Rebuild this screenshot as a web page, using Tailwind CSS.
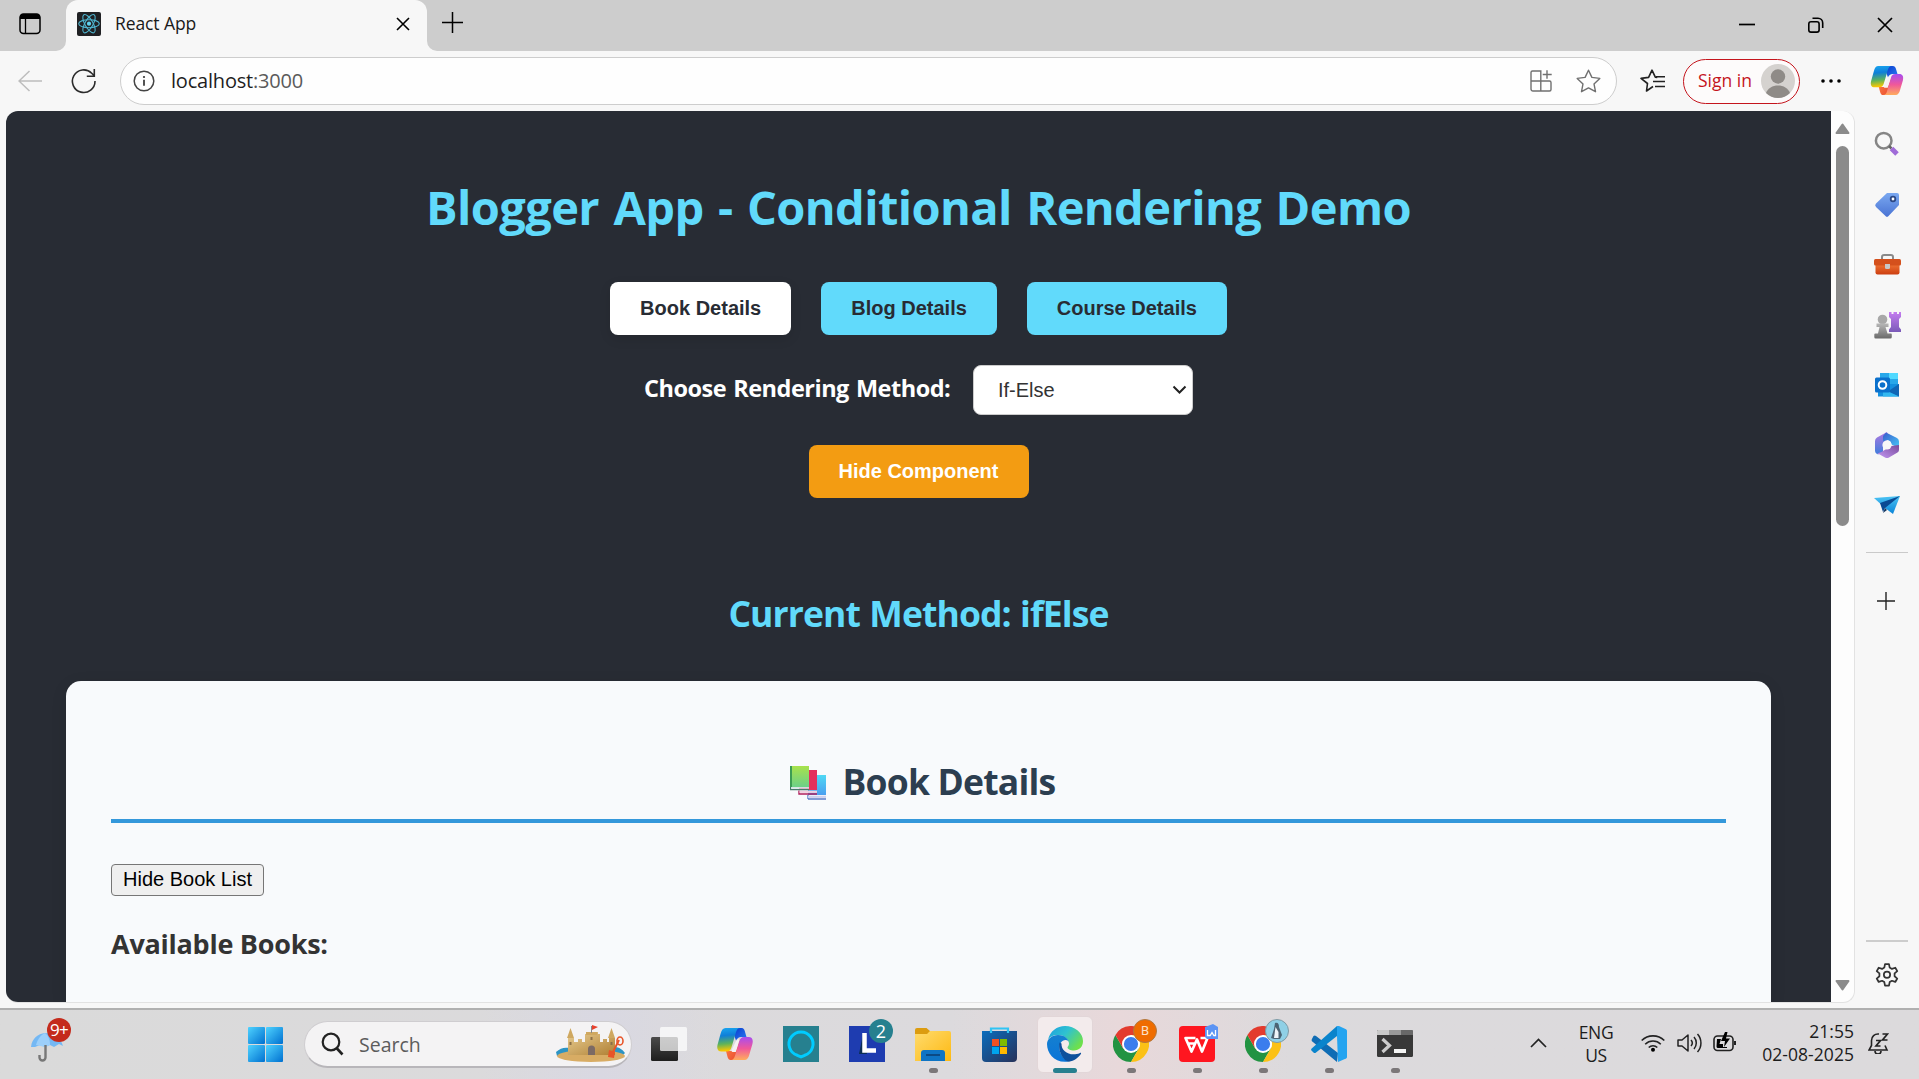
<!DOCTYPE html>
<html lang="en">
<head>
<meta charset="utf-8">
<title>React App</title>
<script src="https://cdn.jsdelivr.net/npm/@tailwindcss/browser@4"></script>
</head>
<body class="w-[1919px] h-[1079px] overflow-hidden bg-[#f7f7f7] font-['Open_Sans','Noto_Sans',sans-serif] flex flex-col">

<!-- shared gradients and symbols -->
<svg class="absolute w-0 h-0" aria-hidden="true">
  <defs>
    <linearGradient id="cpA" x1="0" y1="0" x2="0.1" y2="1"><stop offset="0" stop-color="#1aa7f0"/><stop offset=".35" stop-color="#0f7fd8"/><stop offset=".7" stop-color="#5fb35a"/><stop offset="1" stop-color="#ffc800"/></linearGradient>
    <linearGradient id="cpB" x1="0" y1="0" x2="0" y2="1"><stop offset="0" stop-color="#a84cf0"/><stop offset=".5" stop-color="#f0589a"/><stop offset="1" stop-color="#ffad5c"/></linearGradient>
    <linearGradient id="cpC" x1="0" y1="0" x2="1" y2="1"><stop offset="0" stop-color="#0a3ccc"/><stop offset="1" stop-color="#2a7cf4"/></linearGradient>
    <linearGradient id="cpD" x1="0" y1="0" x2="1" y2="1"><stop offset="0" stop-color="#ff8a4c"/><stop offset="1" stop-color="#e8452c"/></linearGradient>
    <linearGradient id="win" x1="0" y1="0" x2="1" y2="1"><stop offset="0" stop-color="#4fd3ff"/><stop offset="1" stop-color="#0070d0"/></linearGradient>
    <linearGradient id="sky" x1="0" y1="0" x2="0" y2="1"><stop offset="0" stop-color="#4fd8f4"/><stop offset="1" stop-color="#4a9ff0"/></linearGradient>
    <linearGradient id="grn" x1="0" y1="0" x2="0" y2="1"><stop offset="0" stop-color="#a8e24c"/><stop offset="1" stop-color="#6cd088"/></linearGradient>
    <linearGradient id="fold" x1="0" y1="0" x2="1" y2="1"><stop offset="0" stop-color="#ffdb6e"/><stop offset="1" stop-color="#fdb912"/></linearGradient>
    <linearGradient id="store" x1="0" y1="0" x2="1" y2="1"><stop offset="0" stop-color="#0a6cbd"/><stop offset="1" stop-color="#28325a"/></linearGradient>
    <linearGradient id="edT" x1="0" y1="0" x2="1" y2=".6"><stop offset="0" stop-color="#1b9de0"/><stop offset=".5" stop-color="#2fc2d0"/><stop offset="1" stop-color="#6ee04c"/></linearGradient>
    <linearGradient id="edL" x1="0" y1="0" x2="0" y2="1"><stop offset="0" stop-color="#1580d0"/><stop offset="1" stop-color="#0a74d8"/></linearGradient>
    <linearGradient id="pur" x1="0" y1="0" x2="0" y2="1"><stop offset="0" stop-color="#c47cf0"/><stop offset="1" stop-color="#7a5ab8"/></linearGradient>
    <linearGradient id="gry" x1="0" y1="0" x2="0" y2="1"><stop offset="0" stop-color="#b8b8b8"/><stop offset="1" stop-color="#6a6a6a"/></linearGradient>
    <linearGradient id="org" x1="0" y1="0" x2="0" y2="1"><stop offset="0" stop-color="#f07434"/><stop offset="1" stop-color="#cc3e10"/></linearGradient>
    <linearGradient id="tag" x1="0" y1="0" x2="0" y2="1"><stop offset="0" stop-color="#7aa8f0"/><stop offset="1" stop-color="#4a74d4"/></linearGradient>
    <linearGradient id="sand" x1="0" y1="0" x2="1" y2="1"><stop offset="0" stop-color="#e8cd92"/><stop offset="1" stop-color="#b08034"/></linearGradient>
    <linearGradient id="plane" x1="0" y1="0" x2="0" y2="1"><stop offset="0" stop-color="#4cc4f4"/><stop offset="1" stop-color="#0a84d8"/></linearGradient>
    <linearGradient id="dark" x1="0" y1="0" x2="0" y2="1"><stop offset="0" stop-color="#4a4a4a"/><stop offset="1" stop-color="#1e1e1e"/></linearGradient>
    <linearGradient id="m1" x1="0" y1="1" x2="0" y2="0"><stop offset="0" stop-color="#3f7ddc"/><stop offset="1" stop-color="#b078e0"/></linearGradient>
    <linearGradient id="m2" x1="0" y1="0" x2="1" y2="1"><stop offset="0" stop-color="#3a5ccc"/><stop offset="1" stop-color="#46c8f8"/></linearGradient>
    <linearGradient id="m3" x1="0" y1="1" x2="1" y2="0"><stop offset="0" stop-color="#c49af4"/><stop offset="1" stop-color="#7a4a9c"/></linearGradient>
  </defs>
  <symbol id="copilot" viewBox="0 0 36 34">
    <path d="M18 1h6c3 0 3.600 2 4.200 4.500L29.500 10h-5c-3 0-4.500 1.500-5.300 4L17 8z" fill="url(#cpC)"/>
    <path d="M9 24h7c2.500 0 3.500-1 4.300-4l2.700-9-2 14-3.500 8h-3c-3 0-3.500-1.500-4.200-4z" fill="url(#cpD)"/>
    <path d="M8.500 1H23c-2 0-3.200 1.500-4 4.200L14.600 20c-.9 3-2 4.500-5 4.500H4.500C1 24.500-.5 22 .6 17.500L3.500 7C4.500 3 6 1 8.500 1z" fill="url(#cpA)"/>
    <path d="M27.500 33H14c2 0 3.200-1.500 4-4.200L22.200 14.500c.9-3 2-4.500 5-4.500h4.300c3.500 0 5 2.500 3.900 7L32.500 27c-1 4-2.500 6-5 6z" fill="url(#cpB)"/>
    <path d="M19.800 12.500h2.800L18.800 25h-2.600c-1.200 0-2-.6-1.600-2z" fill="#f7f1f4"/>
  </symbol>
  <symbol id="chrome" viewBox="0 0 36 36">
    <path d="M2.400 9A18 18 0 0 0 18 36l7.800-13.500L10.200 22.500z" fill="#229342"/>
    <path d="M33.600 9A18 18 0 0 1 18 36l7.800-13.500A9 9 0 0 0 25.800 13.500L18 9z" fill="#fbc116"/>
    <path d="M2.400 9l7.800 13.500L18 9h15.600A18 18 0 0 0 2.400 9z" fill="#e33b2e"/>
    <circle cx="18" cy="18" r="9" fill="#fff"/><circle cx="18" cy="18" r="7.100" fill="#3b7ded"/>
  </symbol>
</svg>

<!-- tab strip -->
<header class="h-[51px] shrink-0 bg-[#cdcdcd] flex items-center">
  <div class="w-[66px] h-full flex items-center pl-[19px] pb-[3px]">
    <svg width="22" height="22" viewBox="0 0 22 22"><rect x="1" y="1" width="20" height="19.500" rx="3.500" fill="none" stroke="#000" stroke-width="1.500"/><path d="M1 6V4a3 3 0 0 1 3-3h14a3 3 0 0 1 3 3v2z"/><path d="M6.500 5v15" stroke="#000" stroke-width="1.300"/></svg>
  </div>
  <div class="relative w-[361px] h-full bg-[#f7f7f7] rounded-t-[12px] flex items-center pl-[11px] pr-4 pb-1">
    <svg class="absolute -left-[10px] bottom-0" width="10" height="10"><path d="M10 0v10H0A10 10 0 0 0 10 0z" fill="#f7f7f7"/></svg>
    <svg class="absolute -right-[10px] bottom-0" width="10" height="10"><path d="M0 0v10h10A10 10 0 0 1 0 0z" fill="#f7f7f7"/></svg>
    <svg width="24" height="24" viewBox="0 0 24 24"><rect width="24" height="24" rx="2" fill="#202124"/><g fill="none" stroke="#4fb6d0" stroke-width="1.100"><ellipse cx="12" cy="11.700" rx="10.300" ry="4"/><ellipse cx="12" cy="11.700" rx="10.300" ry="4" transform="rotate(60 12 11.700)"/><ellipse cx="12" cy="11.700" rx="10.300" ry="4" transform="rotate(120 12 11.700)"/></g><circle cx="12" cy="11.700" r="2.100" fill="#5fd3f0"/></svg>
    <span class="ml-[14px] mb-[2px] grow text-[17.500px] leading-6 tracking-[-0.1px] text-[#1a1a1a]">React App</span>
    <svg class="mr-px" width="14" height="14"><path d="M1 1l12 12M13 1L1 13" stroke="#000" stroke-width="1.600"/></svg>
  </div>
  <svg class="ml-[15px] mb-[5px]" width="22" height="22"><path d="M0 10.500h21M10.500 0v21" stroke="#000" stroke-width="1.500"/></svg>
  <div class="ml-auto flex items-center pr-[26px] pb-[2px]">
    <svg width="16" height="16"><path d="M0 7.500h16" stroke="#000" stroke-width="1.700"/></svg>
    <svg class="ml-[53px]" width="16" height="16" viewBox="0 0 16 16"><rect x=".8" y="4.800" width="10.300" height="10.300" rx="2.200" fill="none" stroke="#000" stroke-width="1.600"/><path d="M4.500 1.300H10a4.700 4.700 0 0 1 4.700 4.700v5" fill="none" stroke="#000" stroke-width="1.600"/></svg>
    <svg class="ml-[53px]" width="16" height="16"><path d="M1 1l14 14M15 1L1 15" stroke="#000" stroke-width="1.700"/></svg>
  </div>
</header>

<!-- toolbar -->
<div class="h-[60px] shrink-0 flex items-center">
  <svg class="ml-[18px] mb-px" width="24" height="22" viewBox="0 0 24 22"><path d="M24 11H1M11.500 1L1 11l10.500 10" fill="none" stroke="#bdbdbd" stroke-width="1.500"/></svg>
  <svg class="ml-[29px]" width="26" height="26" viewBox="0 0 26 26"><path d="M24 13a11.300 11.300 0 1 1-3.300-7.800L23 7.500M23.300 1v7.200h-7.500" fill="none" stroke="#2b2b2b" stroke-width="1.600"/></svg>
  <div class="ml-[23px] w-[1497px] h-12 mb-px rounded-full border border-[#cdcdcd] bg-[#fefefe] flex items-center pl-3 pr-[15px]">
    <svg width="22" height="22" viewBox="0 0 22 22"><circle cx="11" cy="11" r="9.800" fill="none" stroke="#444" stroke-width="1.500"/><path d="M11 9.800v6" stroke="#333" stroke-width="1.700"/><circle cx="11" cy="7" r="1.100" fill="#333"/></svg>
    <span class="ml-4 mt-px grow text-[20px] leading-6 tracking-[-0.2px] text-[#1f1f1f]">localhost<span class="text-[#5a5a5a]">:3000</span></span>
    <svg width="22" height="22" viewBox="0 0 22 22"><path d="M2.500 1h8.300v20H3a2 2 0 0 1-2-2V2.500A1.500 1.500 0 0 1 2.500 1zM1 11h18.500A1.500 1.500 0 0 1 21 12.500v7a1.500 1.500 0 0 1-1.500 1.500h-9M17 .2v8.600M12.700 4.500h9" fill="none" stroke="#707070" stroke-width="1.400"/></svg>
    <svg class="ml-6" width="25" height="24" viewBox="0 0 25 24"><path d="M12.500 1.200l3.400 7.200 7.900 1-5.800 5.500 1.500 7.800-7-3.800-7 3.800L7 14.900 1.200 9.400l7.900-1z" fill="none" stroke="#707070" stroke-width="1.400" stroke-linejoin="round"/></svg>
  </div>
  <svg class="ml-[23px]" width="25" height="24" viewBox="0 0 25 24"><path d="M13 17.500L6.500 22l1-7.500L1 9.400l7.600-1L12 1.200l3.300 7 2 .3M13 12.500h12M16 7.800h9M15 17.500h10" fill="none" stroke="#222" stroke-width="1.600" stroke-linejoin="round"/></svg>
  <div class="ml-[18px] w-[117px] h-[45px] rounded-full border-[1.500px] border-[#c4141c] bg-[#fdfbfb] flex items-center justify-between pl-[14px] pr-1">
    <span class="mb-[2px] text-[17.500px] leading-6 text-[#c4141c]">Sign in</span>
    <svg width="34" height="34" viewBox="0 0 34 34"><circle cx="17" cy="17" r="17" fill="#d5d2cf"/><circle cx="17" cy="12.500" r="7.200" fill="#8f8b87"/><path d="M5 29c2-5 6.500-7.500 12-7.500S27 24 29 29a17 17 0 0 1-24 0z" fill="#8f8b87"/></svg>
  </div>
  <svg class="ml-5" width="22" height="6"><circle cx="3" cy="3" r="1.800"/><circle cx="11" cy="3" r="1.800"/><circle cx="19" cy="3" r="1.800"/></svg>
  <svg class="ml-[28px] mb-px" width="34" height="31"><use href="#copilot" width="34" height="31"/></svg>
</div>

<!-- viewport and sidebar -->
<div class="h-[897px] shrink-0 flex">
  <div class="ml-[6px] w-[1849px] h-[892px] rounded-[12px] overflow-hidden flex border-r border-b border-[#e2e2e2] bg-[#fdfdfd]">
    <main class="w-[1825px] shrink-0 h-[891px] overflow-hidden bg-[#282c34] flex flex-col items-center px-[60px]">
      <h1 class="mt-[66px] text-[47px] leading-[60px] font-bold whitespace-nowrap tracking-[-0.6px] [word-spacing:2.800px] text-[#61dafb]">Blogger App - Conditional Rendering Demo</h1>
      <div class="mt-[45px] flex gap-[30px] font-['Liberation_Sans',Arial,sans-serif] text-[20px] leading-[23px] font-bold text-[#282c34]">
        <button class="px-[30px] py-[15px] rounded-[8px] bg-white shadow-[0_4px_12px_rgba(0,0,0,0.1)]">Book Details</button>
        <button class="px-[30px] py-[15px] rounded-[8px] bg-[#61dafb]">Blog Details</button>
        <button class="px-[30px] py-[15px] rounded-[8px] bg-[#61dafb]">Course Details</button>
      </div>
      <div class="mt-[30px] flex items-center">
        <label class="w-[329px] pb-[5px] text-[23.500px] leading-8 font-bold whitespace-nowrap tracking-[-0.5px] [word-spacing:1.500px] text-white">Choose Rendering Method:</label>
        <div class="w-[220px] h-[50px] rounded-[8px] border border-[#ccc] bg-white flex items-center justify-between pl-6 pr-[5px] font-['Liberation_Sans',Arial,sans-serif] text-[20px] text-[#333]">If-Else
          <svg width="15" height="10"><path d="M1.500 1.500l6 6 6-6" fill="none" stroke="#222" stroke-width="2"/></svg>
        </div>
      </div>
      <button class="mt-[30px] h-[53px] w-[220px] pb-[2px] rounded-[8px] bg-[#f39c12] font-['Liberation_Sans',Arial,sans-serif] text-[20px] font-bold text-white">Hide Component</button>
      <h2 class="mt-[91px] text-[35.500px] leading-[48px] font-bold whitespace-nowrap tracking-[-0.9px] [word-spacing:1px] text-[#61dafb]">Current Method: ifElse</h2>
      <section class="mt-[44px] w-full grow shrink-0 rounded-t-[15px] bg-[#f8fafc] px-[45px] pt-[76px] text-[#333] shadow-[0_4px_16px_rgba(0,0,0,0.1)]">
        <h2 class="flex items-center justify-center pb-[14px] border-b-4 border-[#3498db] text-[35.500px] leading-[48px] font-bold text-[#2c3e50]">
          <svg class="ml-[8px] mr-[15px] mt-[4px]" width="38" height="34" viewBox="0 0 38 34"><path d="M18 9h18v20H18z" fill="url(#sky)"/><path d="M18 33h18M18 29v4" stroke="#5a7cc8" stroke-width="1.400"/><path d="M18 30.800h18" stroke="#ccd0ee" stroke-width="2.200"/><path d="M9 4h18v20H9z" fill="#e3305c"/><path d="M9 24.500v3.500h18" fill="none" stroke="#b0205c" stroke-width="1.400"/><path d="M9.500 25.800H27" stroke="#f0d0e0" stroke-width="2.200"/><path d="M0 0h19v21H0z" fill="url(#grn)"/><path d="M1 0v21" stroke="#3c9c54" stroke-width="2"/><path d="M.6 21v2.700H19" fill="none" stroke="#48786c" stroke-width="1.300"/><path d="M1.200 21.900H19" stroke="#d4e4e4" stroke-width="1.700"/></svg>
          <span class="tracking-[-0.8px]">Book Details</span>
        </h2>
        <button class="block mt-[41px] w-[153px] h-8 rounded-[4px] border border-[#767676] bg-[#efefef] font-['Liberation_Sans',Arial,sans-serif] text-[20px] leading-[27px] pb-[2px] text-black whitespace-nowrap">Hide Book List</button>
        <h3 class="mt-[30px] text-[27px] leading-9 font-bold tracking-[-0.25px]">Available Books:</h3>
      </section>
    </main>
    <!-- scrollbar -->
    <div class="w-[23px] flex flex-col items-center pt-3 pb-[11px]">
      <svg width="15" height="12"><path d="M7.500 1.500L13.500 10h-12z" fill="#8b8b8b" stroke="#8b8b8b" stroke-width="2" stroke-linejoin="round"/></svg>
      <div class="mt-[11px] w-[13px] h-[380px] rounded-full bg-[#8b8b8b]"></div>
      <svg class="mt-auto" width="15" height="12"><path d="M7.500 10.500L13.500 2h-12z" fill="#8b8b8b" stroke="#8b8b8b" stroke-width="2" stroke-linejoin="round"/></svg>
    </div>
  </div>
  <!-- sidebar -->
  <aside class="w-16 flex flex-col items-center">
    <div class="mt-[4px] flex flex-col">
      <div class="h-[60px] flex items-center pb-[2px]"><svg width="26" height="26" viewBox="0 0 26 26"><circle cx="9.700" cy="9.700" r="7.800" fill="none" stroke="#858585" stroke-width="2.500"/><path d="M15 15l2.500 2.500" stroke="#666" stroke-width="2.500"/><path d="M17.500 17.500l5.500 5.500" stroke="#a06cd8" stroke-width="5"/></svg></div>
      <div class="h-[60px] flex items-center"><svg width="26" height="26" viewBox="0 0 26 26"><path d="M13 1h10a2 2 0 0 1 2 2v10L14.500 24a2 2 0 0 1-3 0L2 15a2.500 2.500 0 0 1 0-3.500z" fill="url(#tag)"/><circle cx="19" cy="7" r="2.300" fill="#fff" stroke="#2c4884" stroke-width="1.800"/></svg></div>
      <div class="h-[60px] flex items-center"><svg width="27" height="26" viewBox="0 0 27 26"><path d="M8 8V5a2 2 0 0 1 2-2h7a2 2 0 0 1 2 2v3" fill="none" stroke="#8a8a8a" stroke-width="2"/><path d="M1.500 12h24v8.500a2 2 0 0 1-2 2h-20a2 2 0 0 1-2-2z" fill="url(#org)"/><rect y="7" width="27" height="6.500" rx="1.500" fill="#d4501c"/><path d="M11 12h5v3.500a1.500 1.500 0 0 1-1.500 1.500h-2a1.500 1.500 0 0 1-1.500-1.500z" fill="#c8c8c8"/></svg></div>
      <div class="h-[60px] flex items-center"><svg width="27" height="28" viewBox="0 0 27 28"><path d="M15 1h2.500v2h2V1h3.500v2h2V1H27v5l-2 2v8l2 2.500V21H15v-2.500l2-2.500V8l-2-2z" fill="url(#pur)"/><circle cx="8.500" cy="8.500" r="4.800" fill="#a8a8a8"/><path d="M2.500 12.500h12v3.500h-3l2 6.500H17a1 1 0 0 1 .8 1V26a1.500 1.500 0 0 1-1.500 1.500H2A1.500 1.500 0 0 1 .3 26v-2.500a1 1 0 0 1 1-1H4l1.500-6.500h-3z" fill="url(#gry)"/></svg></div>
      <div class="h-[60px] flex items-center"><svg width="26" height="26" viewBox="0 0 26 26"><path d="M6 1h18v12H6z" fill="#28a8ea"/><path d="M15 1h9v6h-9z" fill="#50d9ff"/><path d="M4 12h21v12.500H4z" fill="#1490df"/><path d="M13 20l12-8v12.500z" fill="#1066b5"/><path d="M9 17l16 7.500H9z" fill="#32b8f0"/><rect x="1" y="5.500" width="15" height="15" rx="1.500" fill="#0a70cc"/><circle cx="8.500" cy="13" r="3.800" fill="none" stroke="#fff" stroke-width="2"/></svg></div>
      <div class="h-[60px] flex items-center"><svg width="26" height="28" viewBox="0 0 26 28"><path d="M13 1L3 6.500a4 4 0 0 0-2 3.400V20a3.500 3.500 0 0 0 5.500 2.600L9 21v-9l6-4z" fill="url(#m1)"/><path d="M12 1.500L23 7a4 4 0 0 1 2 3.500V17l-7.500-3.500A5 5 0 0 0 13 9L9 10.500V5z" fill="url(#m2)"/><path d="M25 14v5a3 3 0 0 1-1.500 2.500L15 26.500a4 4 0 0 1-4 0L3 22c2 0 4-.5 6-2l8-5z" fill="url(#m3)"/><circle cx="13" cy="14" r="4.600" fill="#f7f7f7"/></svg></div>
      <div class="h-[60px] flex items-center"><svg width="26" height="20" viewBox="0 0 26 20"><path d="M0 3L26 1l-7 18-8-6z" fill="url(#plane)"/><path d="M6 8L26 1 11 13l-2 4z" fill="#0a4a94"/><path d="M11 13l2 2-4 3z" fill="#14345c"/></svg></div>
    </div>
    <div class="mt-[17px] w-[42px] h-px bg-[#cacaca]"></div>
    <svg class="mt-[39px] mr-[2px]" width="18" height="18"><path d="M0 9h18M9 0v18" stroke="#222" stroke-width="1.400"/></svg>
    <div class="mt-auto w-[42px] h-[2px] bg-[#cdcdcd]"></div>
    <svg class="mt-5 mb-[18px]" width="28" height="28" viewBox="0 0 24 24"><path d="M10.300 1.800h3.400l.6 3 1.900 1.100 2.900-1 1.700 2.900-2.300 2v2.400l2.300 2-1.700 2.900-2.900-1-1.900 1.100-.6 3h-3.400l-.6-3-1.900-1.100-2.900 1-1.700-2.900 2.300-2V9.800l-2.300-2 1.700-2.900 2.900 1 1.900-1.100z" fill="none" stroke="#333" stroke-width="1.500" stroke-linejoin="round"/><circle cx="12" cy="11" r="2.700" fill="none" stroke="#333" stroke-width="1.500"/></svg>
  </aside>
</div>

<!-- taskbar -->
<footer class="relative h-[71px] shrink-0 border-t-2 border-[#b0b0b0] bg-linear-to-r from-[#dadada] via-[#dcdadd] to-[#dcdadc] flex">
  <div class="absolute inset-y-0 left-[950px] w-[340px] bg-linear-to-r from-transparent via-[#e8d8da] to-transparent"></div>
  <div class="absolute inset-y-0 left-[480px] w-[240px] bg-linear-to-r from-transparent via-[#d9d8e2] to-transparent"></div>
  <div class="relative w-[248px]">
    <svg class="absolute left-[31px] top-[19px]" width="34" height="34" viewBox="0 0 34 34"><path d="M0 18C1 9 7 5 14 4c9 0 16 5 18 13l-4-2-5 3-4-2-5 2-5-2-5 2z" fill="#74b8f4"/><path d="M5 16C7 9 10 6 14 4c4 3 5 8 5 12l-5 2z" fill="#9ccffa"/><path d="M14.500 16v12.500a3 3 0 0 1-6 0V26" fill="none" stroke="#777" stroke-width="2.400"/></svg>
    <div class="absolute left-[47px] top-[8px] size-[24px] rounded-full bg-[#c42b1c] text-white text-[17px] leading-[23px] tracking-[-0.8px] text-center">9+</div>
  </div>
  <svg class="mt-[17px]" width="35" height="35"><g fill="url(#win)"><rect width="17" height="17" rx="1"/><rect x="18" width="17" height="17" rx="1"/><rect y="18" width="17" height="17" rx="1"/><rect x="18" y="18" width="17" height="17" rx="1"/></g></svg>
  <div class="relative ml-[21px] mt-[11px] w-[328px] h-[47px] rounded-full border border-[#cfcdd0] border-b-2 border-b-[#b8b6ba] bg-[#f4f3f4] flex items-center pl-4 pr-1">
    <svg width="24" height="24" viewBox="0 0 24 24"><circle cx="10" cy="10" r="8.300" fill="none" stroke="#222" stroke-width="2.200"/><path d="M15.500 16l6 6.500" stroke="#222" stroke-width="2.600"/></svg>
    <span class="ml-[14px] mt-px text-[19.500px] leading-6 text-[#5c5c5c] grow">Search</span>
    <svg class="mb-px" width="72" height="38" viewBox="0 0 72 38"><path d="M1 27c4-4 9-5 13-4v8H2zM60 22c4 0 8 3 10 6l-4 4h-8z" fill="#2c94c4"/><ellipse cx="36" cy="31" rx="34" ry="6" fill="#d8ac64"/><path d="M13 13h6v4h4v-3h4v3h3V9h3V7h3v2h4V7h3v2h2v8h3v-3h4v3h2v-4h6v17H13z" fill="url(#sand)"/><path d="M12 13l3.500-10L19 13zM53 13l3.500-10L60 13zM31 7h11v3H31z" fill="#cfa860"/><path d="M33 30v-6a3.500 3.500 0 0 1 7 0v6z" fill="#7c6a64"/><path d="M14.500 17h2v3h-2zM55.500 17h2v3h-2zM35.500 12h2v3h-2z" fill="#8c7048"/><path d="M36.500 8V1" stroke="#888"/><path d="M37 0l6 2-6 3z" fill="#e8402c"/><path d="M64 15l-7 14" stroke="#e85428" stroke-width="2"/><ellipse cx="65" cy="16" rx="3" ry="4" fill="none" stroke="#e85428" stroke-width="1.600"/><path d="M54 25l6 2-1 6-6-1z" fill="#e85428"/></svg>
  </div>
  <nav class="relative ml-[4px] flex">
    <div class="w-[66px] pt-[17px] flex justify-center"><svg width="36" height="36"><rect y="10" width="27" height="24" rx="1.500" fill="url(#dark)"/><rect x="9" width="27" height="24" rx="1.500" fill="#fff" fill-opacity=".72"/></svg></div>
    <div class="w-[66px] pt-[17px] flex justify-center"><svg width="36" height="34"><use href="#copilot" width="36" height="34"/></svg></div>
    <div class="w-[66px] pt-[16px] flex justify-center"><svg width="36" height="36"><rect width="36" height="36" fill="#26808f"/><path d="M14.300 29.300a12 12 0 1 1 7.400 0l-3.700 1.500z" fill="none" stroke="#0cf" stroke-width="3"/></svg></div>
    <div class="relative w-[66px] pt-[16px] flex justify-center"><div class="relative size-9 bg-[#1e3cb0]"><svg class="absolute inset-0" width="36" height="36"><path d="M14 8l-4 20h8z" fill="#0c2e54"/><path d="M15.500 7v17.500H27" fill="none" stroke="#fff" stroke-width="4.500"/></svg></div><div class="absolute left-[35px] top-[9px] size-6 rounded-full bg-[#26808f] text-white text-[18px] leading-6 text-center">2</div></div>
    <div class="relative w-[66px] pt-[18px] flex justify-center"><svg width="36" height="34"><path d="M0 2a2 2 0 0 1 2-2h9.500l4 3.500V8H0z" fill="#dc9c10"/><path d="M0 6h12l3-3h19a2 2 0 0 1 2 2v28H0z" fill="url(#fold)"/><path d="M6 33v-8a3 3 0 0 1 3-3h18a3 3 0 0 1 3 3v8z" fill="#0e74c4"/><path d="M11 27h14" stroke="#0c4a84" stroke-width="2"/></svg><i class="absolute left-[29px] top-[58px] w-[9px] h-[5px] rounded-full bg-[#7b7779]"></i></div>
    <div class="w-[66px] pt-[17px] flex justify-center"><svg width="35" height="35"><path d="M9 6V1.500h17V6" fill="none" stroke="#30c4f4" stroke-width="2.200"/><path d="M0 4h35v27a4 4 0 0 1-4 4H4a4 4 0 0 1-4-4z" fill="url(#store)"/><path d="M9 6V3.500M26 6V3.500" stroke="#30c4f4" stroke-width="2.200"/><path d="M10 12h7v7h-7z" fill="#f25022"/><path d="M18 12h7v7h-7z" fill="#7fba00"/><path d="M10 20h7v7h-7z" fill="#00a4ef"/><path d="M18 20h7v7h-7z" fill="#ffb900"/></svg></div>
    <div class="relative w-[66px] flex justify-center"><div class="mt-[6px] w-14 h-[57px] rounded-[6px] bg-[#f3ebec] border border-[#e2d6d8] flex justify-center pt-[9px]">
      <svg width="36" height="36" viewBox="0 0 36 36"><path d="M1 14C3 5 10 0 18 0c10 0 18 7 18 15 0 6-4 9.500-9 9.500-4 0-6.500-1.500-6.500-3 0-1 1.500-1.500 1.500-4C22 14 18 9 11 9 6 9 2.500 11 1 14z" fill="url(#edT)"/><path d="M0 18c0-5 5-9 11-9 7 0 11 4.500 11 8 0-2-1.500-3-3.500-3-4 0-6 4-6 8 0 6 5 12 9 13.500C8 37.500 0 28 0 18z" fill="url(#edL)"/><path d="M12.500 16.500C10.500 27 18 36 22 35.700c5-.7 9.500-4 12-8 .3-.8-.3-1.200-1-.8C24 31 14 26 14.500 17.500z" fill="#0d4f9c"/></svg></div><i class="absolute left-[21px] top-[58px] w-6 h-[5px] rounded-full bg-[#26808f]"></i></div>
    <div class="relative w-[66px] pt-[16px] flex justify-center"><svg width="36" height="36"><use href="#chrome" width="36" height="36"/></svg><div class="absolute left-[35px] top-[9px] size-6 rounded-full bg-[#ef6c00] border border-[#b07840] text-[#fbe0c8] text-[13px] leading-[22px] font-['Roboto',sans-serif] text-center">B</div><i class="absolute left-[29px] top-[58px] w-[9px] h-[5px] rounded-full bg-[#7b7779]"></i></div>
    <div class="relative w-[66px] pt-[16px] flex justify-center"><svg width="36" height="36"><rect width="36" height="36" rx="4" fill="#ff1620"/><path d="M16.500 12H6.500l6 13.500L18 13.500l5 12L28.500 12h-7M9.500 17.500h6" fill="none" stroke="#fff" stroke-width="2.700" stroke-linejoin="round"/></svg><svg class="absolute left-[41px] top-[14px]" width="14" height="16"><path d="M0 3L8 0l5 3v12H2l-2-2z" fill="#5c94f4"/><path d="M2.500 6v5.500h2.700l1.800-3 1.800 3h1.700V6" fill="none" stroke="#fff" stroke-width="1.300"/></svg><i class="absolute left-[29px] top-[58px] w-[9px] h-[5px] rounded-full bg-[#7b7779]"></i></div>
    <div class="relative w-[66px] pt-[16px] flex justify-center"><svg width="36" height="36"><use href="#chrome" width="36" height="36"/></svg><svg class="absolute left-[35px] top-[9px]" width="24" height="24"><circle cx="12" cy="12" r="11.500" fill="#8fd0e6" stroke="#809aa4"/><path d="M10 4c3-1 4 1 4 4l3 8-2 4H9l-3-1 3-9z" fill="#4c6474"/><path d="M10.500 8l3 5v6H9z" fill="#eef4f8"/></svg><i class="absolute left-[29px] top-[58px] w-[9px] h-[5px] rounded-full bg-[#7b7779]"></i></div>
    <div class="relative w-[66px] pt-[16px] flex justify-center"><svg width="36" height="36" viewBox="0 0 36 36"><path d="M.7 13.500L2.500 10a2 2 0 0 1 2.500 0L27 27l-1 9L.7 15z" fill="#0f6cb4"/><path d="M26 0v10L5 26.500a2 2 0 0 1-2.500 0L.7 24.800a1.500 1.500 0 0 1 0-2.200z" fill="#0a84cc"/><path d="M27 36l-1-26V0l2 0 7 3.300a1.800 1.800 0 0 1 1 1.600v26a1.800 1.800 0 0 1-1 1.600z" fill="#24a4f0"/></svg><i class="absolute left-[29px] top-[58px] w-[9px] h-[5px] rounded-full bg-[#7b7779]"></i></div>
    <div class="relative w-[66px] pt-[20px] flex justify-center"><svg width="36" height="27"><rect width="36" height="27" rx="1.500" fill="#383838"/><path d="M1 0h11v5H0V1z" fill="#c8c8c8"/><path d="M12 0h12v5H12z" fill="#999"/><path d="M24 0h11l1 1v4H24z" fill="#686868"/><path d="M5.500 9l7 6.500-7 6.500" fill="none" stroke="#ccc" stroke-width="3.200"/><path d="M17 21h12" stroke="#f4f4f4" stroke-width="4"/></svg><i class="absolute left-[29px] top-[58px] w-[9px] h-[5px] rounded-full bg-[#7b7779]"></i></div>
  </nav>
  <!-- system tray -->
  <div class="relative ml-auto h-full flex items-center pb-[3px] pr-[30px] text-[#1c1c1c] text-[17.500px] leading-[23px]">
    <svg width="17" height="10"><path d="M1 9l7.500-7.500L16 9" fill="none" stroke="#222" stroke-width="1.700"/></svg>
    <div class="ml-[31px] mt-[2px] w-[36px] text-center tracking-[-0.4px]">ENG<br>US</div>
    <svg class="ml-[27px]" width="24" height="18" viewBox="0 0 24 18"><g fill="none" stroke="#222" stroke-width="1.600"><path d="M.7 6.500a16 16 0 0 1 22.600 0M4.200 10.200a11 11 0 0 1 15.600 0M7.700 13.500a6.200 6.200 0 0 1 8.600 0"/></g><circle cx="12" cy="15.700" r="2"/></svg>
    <svg class="ml-3" width="25" height="20" viewBox="0 0 25 20"><g fill="none" stroke="#222" stroke-width="1.500"><path d="M1 7v6h4l6 5V2L5 7z" stroke-linejoin="round"/><path d="M14 7a4.500 4.500 0 0 1 0 6M17 4a9 9 0 0 1 0 12M20.500 1a13.500 13.500 0 0 1 0 18"/></g></svg>
    <svg class="ml-[11px] mb-[2px]" width="24" height="20" viewBox="0 0 24 20"><rect x="1" y="4" width="19" height="14.500" rx="3.500" fill="none" stroke="#222" stroke-width="1.600"/><path d="M4 7h4l-1.500 5H10v3h4v1H5a1.500 1.500 0 0 1-1.500-1.500z"/><path d="M12 0L8 9h4l-1 6 6-8.500h-4L14.500 0z"/><path d="M22 9v4" stroke="#222" stroke-width="2"/></svg>
    <div class="ml-[22px] w-[95px] text-right tracking-[0.05px]">21:55<br>02-08-2025</div>
    <svg class="ml-[14px]" width="21" height="22" viewBox="0 0 21 22"><g fill="none" stroke="#222" stroke-width="1.600"><path d="M11 2C6.500 1.500 3.500 4.500 3.500 8.500v5L1 18h18l-2-4.500"/><path d="M7 19a3 3 0 0 0 6 0"/><path d="M8 8.500h4.500L8 14h4.500M14.500 2h5l-5 6h5" stroke-width="1.700"/></g></svg>
  </div>
</footer>
</body>
</html>
